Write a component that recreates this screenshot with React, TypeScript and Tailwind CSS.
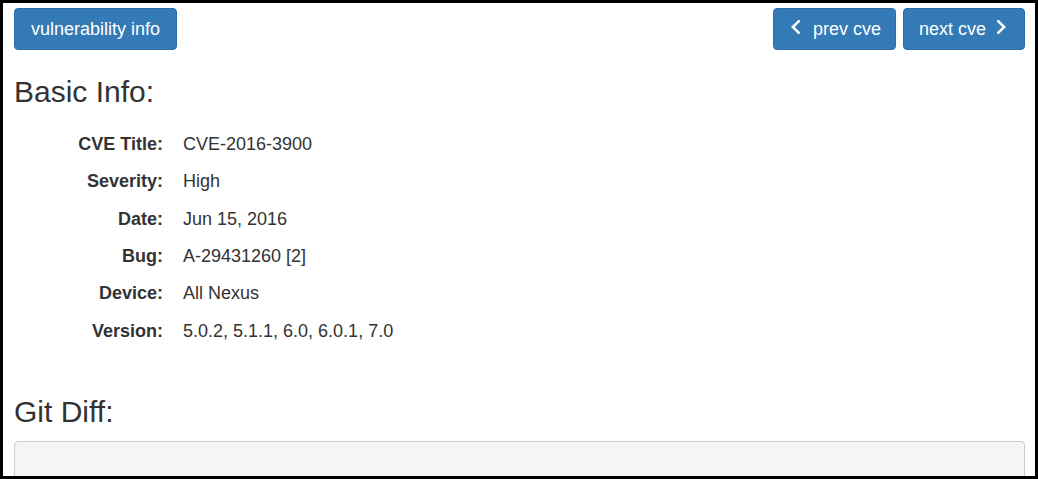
import React from "react";

const rows: [string, string][] = [
  ["CVE Title:", "CVE-2016-3900"],
  ["Severity:", "High"],
  ["Date:", "Jun 15, 2016"],
  ["Bug:", "A-29431260 [2]"],
  ["Device:", "All Nexus"],
  ["Version:", "5.0.2, 5.1.1, 6.0, 6.0.1, 7.0"],
];

function ChevLeft() {
  return (
    <svg width="9" height="14" viewBox="0 0 9 14" className="mr-[13px] -translate-y-[2px] shrink-0">
      <polyline points="7.8,1.2 1.8,7 7.8,12.8" fill="none" stroke="white" strokeWidth="2.5" strokeLinecap="square" />
    </svg>
  );
}
function ChevRight() {
  return (
    <svg width="9" height="14" viewBox="0 0 9 14" className="-translate-y-[2px] shrink-0">
      <polyline points="1.2,1.2 7.2,7 1.2,12.8" fill="none" stroke="white" strokeWidth="2.5" strokeLinecap="square" />
    </svg>
  );
}

export default function App() {
  return (
    <div
      className="w-[1038px] h-[479px] border-[3px] border-black bg-white overflow-hidden text-[#333]"
      style={{ fontFamily: '"Liberation Sans", Arial, sans-serif' }}
    >
      <div className="pl-[11px] pr-[10px] pt-[5px]">
        <div className="flex justify-between">
          <button className="h-[42px] px-[16px] rounded-[4px] bg-[#337ab7] border border-[#2e6da4] text-white text-[18px] leading-[20px]">
            vulnerability info
          </button>
          <div className="flex gap-[7px]">
            <button className="h-[42px] w-[123px] pl-[17px] flex items-center rounded-[4px] bg-[#337ab7] border border-[#2e6da4] text-white text-[18px] leading-[20px]">
              <ChevLeft />
              <span>prev cve</span>
            </button>
            <button className="h-[42px] w-[122px] pl-[15px] flex items-center rounded-[4px] bg-[#337ab7] border border-[#2e6da4] text-white text-[18px] leading-[20px]">
              <span className="w-[78px] text-left">next cve</span>
              <ChevRight />
            </button>
          </div>
        </div>
        <h2 className="mt-[24.6px] text-[30px] leading-[33px] font-medium">Basic Info:</h2>
        <div className="mt-[24.2px]">
          {rows.map(([k, v]) => (
            <div key={k} className="flex h-[37.4px] text-[18px] leading-[25.7px]">
              <div className="w-[149px] text-right font-bold">{k}</div>
              <div className="ml-[20px]">{v}</div>
            </div>
          ))}
        </div>
        <h2 className="mt-[38.4px] text-[30px] leading-[33px] font-medium">Git Diff:</h2>
        <div className="mt-[13.4px] h-[80px] bg-[#f5f5f5] border border-[#ccc] rounded-[4px]" />
      </div>
    </div>
  );
}
